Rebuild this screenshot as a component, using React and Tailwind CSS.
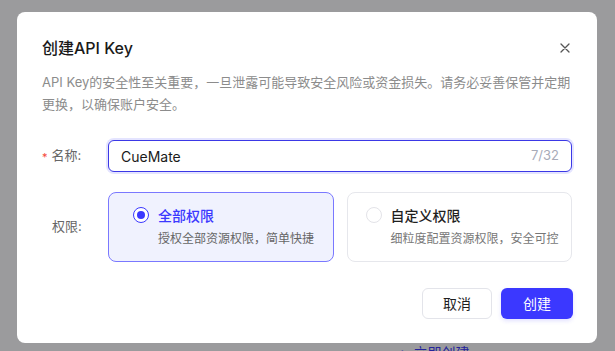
import React from "react";

const font = { fontFamily: '"Inter", "Noto Sans CJK SC", sans-serif' };

function Radio({ checked }) {
  return checked ? (
    <span className="flex h-4 w-4 shrink-0 items-center justify-center rounded-full border border-[#3b38ff] bg-white">
      <span className="h-2 w-2 rounded-full bg-[#3b38ff]" />
    </span>
  ) : (
    <span className="h-4 w-4 shrink-0 rounded-full border border-[#e3e3e8] bg-white" />
  );
}

export default function App() {
  return (
    <div
      className="relative h-[351px] w-[615px] overflow-hidden bg-[#9b9b9d] pl-[17px] pt-[12px]"
      style={font}
    >
      {/* page content behind overlay */}
      <div className="absolute left-[397px] top-[342px] flex items-center gap-[6px] text-[14px] leading-[22px] text-[#25249b]">
        <span className="text-[16px]">+</span>
        <span>立即创建</span>
      </div>

      <div className="relative flex h-[331px] w-[580px] flex-col rounded-[8px] bg-white px-[25px] pt-[24px]">
        <div className="flex h-[24px] items-center justify-between">
          <h2 className="text-[16px] font-medium leading-[24px] text-[#1a1a1a]">创建API Key</h2>
          <button className="-mr-px flex h-[16px] w-[16px] items-center justify-center text-[#555]">
            <svg width="10" height="10" viewBox="0 0 10 10" fill="none" stroke="currentColor" strokeWidth="1.3" strokeLinecap="round">
              <path d="M1 1L9 9M9 1L1 9" />
            </svg>
          </button>
        </div>

        <p className="mt-[11px] w-[532px] text-[13px] leading-[22px] text-[#8c8c8c]">
          API Key的安全性至关重要，一旦泄露可能导致安全风险或资金损失。请务必妥善保管并定期更换，以确保账户安全。
        </p>

        <div className="mt-[25px] flex items-center">
          <label className="flex w-[66px] shrink-0 items-center text-[13px] text-[#666]">
            <span className="mr-[4px] mt-[2px] text-[11px] text-[#f5483b]">*</span>
            <span>名称:</span>
          </label>
          <div className="flex h-[32px] w-[464px] items-center justify-between rounded-[6px] border border-[#3b38e6] bg-white px-[12px] shadow-[0_0_0_2px_#e4e4ff]">
            <span className="text-[14px] text-[#1a1a1a]">CueMate</span>
            <span className="text-[13px] text-[#a8abb8]">7/32</span>
          </div>
        </div>

        <div className="mt-[20px] flex items-center">
          <label className="w-[66px] shrink-0 pl-[10px] text-[13px] text-[#666]">权限:</label>
          <div className="grid w-[464px] grid-cols-2 gap-[13px]">
            <div className="h-[70px] rounded-[8px] border border-[#7a78ff] bg-[#f0f2fe] pl-[24px] pt-[11px]">
              <div className="flex h-[22px] items-center gap-[9px]">
                <Radio checked />
                <span className="text-[14px] font-medium text-[#3b38ff]">全部权限</span>
              </div>
              <div className="mt-[3px] pl-[25px] text-[12px] leading-[20px] text-[#666]">
                授权全部资源权限，简单快捷
              </div>
            </div>
            <div className="h-[70px] rounded-[8px] border border-[#e6e7ec] bg-white pl-[18px] pt-[11px]">
              <div className="flex h-[22px] items-center gap-[9px]">
                <Radio />
                <span className="text-[14px] font-medium text-[#1f1f1f]">自定义权限</span>
              </div>
              <div className="mt-[3px] pl-[25px] text-[12px] leading-[20px] text-[#777]">
                细粒度配置资源权限，安全可控
              </div>
            </div>
          </div>
        </div>

        <div className="mt-[26px] flex justify-end gap-[9px]">
          <button className="h-[31px] w-[70px] rounded-[6px] border border-[#e3e4ea] bg-white text-[14px] text-[#1f1f1f]">
            取消
          </button>
          <button className="-mr-px h-[31px] w-[72px] rounded-[6px] bg-[#3b38ff] text-[14px] text-white shadow-[0_2px_4px_rgba(59,56,255,0.15)]">
            创建
          </button>
        </div>
      </div>
    </div>
  );
}
